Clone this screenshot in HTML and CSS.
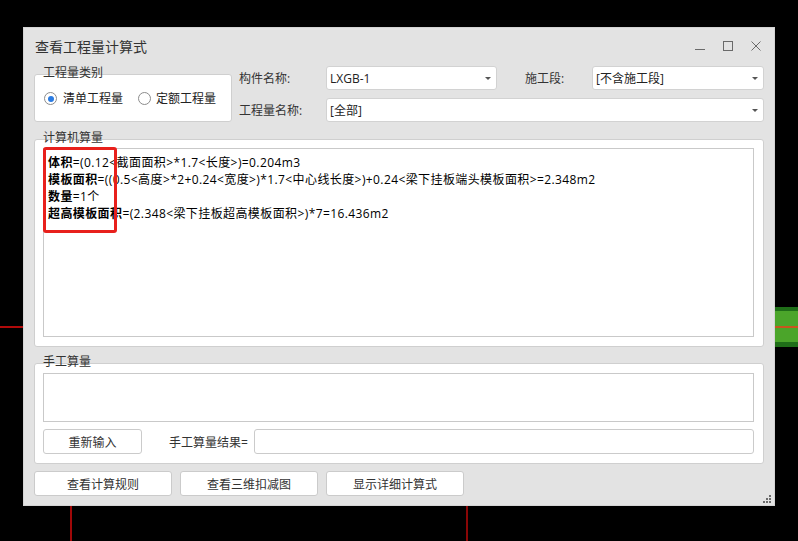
FILE: index.html
```html
<!DOCTYPE html>
<html lang="zh-CN">
<head>
<meta charset="utf-8">
<title>查看工程量计算式</title>
<link rel="stylesheet" href="styles.css">
</head>
<body>
<div class="desktop">
  <div class="bg-hline"></div>
  <div class="bg-vline v1"></div>
  <div class="bg-vline v2"></div>
  <div class="green-bar"><div class="green-line"></div></div>

  <div class="dialog">
    <div class="titlebar">
      <span class="title">查看工程量计算式</span>
      <div class="controls">
        <svg width="10" height="10" viewBox="0 0 10 10"><path d="M0 8.5H10" stroke="#6a6a6a" stroke-width="1"/></svg>
        <svg width="10" height="10" viewBox="0 0 10 10"><rect x="0.5" y="0.5" width="9" height="9" fill="none" stroke="#6a6a6a" stroke-width="1"/></svg>
        <svg width="10" height="10" viewBox="0 0 10 10"><path d="M0.5 0.5L9.5 9.5M9.5 0.5L0.5 9.5" stroke="#6a6a6a" stroke-width="1"/></svg>
      </div>
    </div>

    <div class="top">
      <div class="group type-group">
        <span class="group-title">工程量类别</span>
        <label class="radio"><span class="radio-dot checked"></span>清单工程量</label>
        <label class="radio second"><span class="radio-dot"></span>定额工程量</label>
      </div>
      <div class="fields">
        <div class="field-row">
          <span class="label">构件名称:</span>
          <div class="combo combo-part">LXGB-1<i class="arrow"></i></div>
          <span class="label label-stage">施工段:</span>
          <div class="combo grow">[不含施工段]<i class="arrow"></i></div>
        </div>
        <div class="field-row">
          <span class="label">工程量名称:</span>
          <div class="combo grow">[全部]<i class="arrow"></i></div>
        </div>
      </div>
    </div>

    <div class="group calc-group">
      <span class="group-title">计算机算量</span>
      <div class="textarea formula">
        <div class="line"><b>体积</b>=(0.12&lt;截面面积&gt;*1.7&lt;长度&gt;)=0.204m3</div>
        <div class="line"><b>模板面积</b>=((0.5&lt;高度&gt;*2+0.24&lt;宽度&gt;)*1.7&lt;中心线长度&gt;)+0.24&lt;梁下挂板端头模板面积&gt;=2.348m2</div>
        <div class="line"><b>数量</b>=1个</div>
        <div class="line"><b>超高模板面积</b>=(2.348&lt;梁下挂板超高模板面积&gt;)*7=16.436m2</div>
        <div class="highlight"></div>
      </div>
    </div>

    <div class="group manual-group">
      <span class="group-title">手工算量</span>
      <div class="textarea manual"></div>
      <div class="manual-row">
        <button class="btn btn-reset">重新输入</button>
        <span class="result-label">手工算量结果=</span>
        <div class="input"></div>
      </div>
    </div>

    <div class="actions">
      <button class="btn btn-action">查看计算规则</button>
      <button class="btn btn-action">查看三维扣减图</button>
      <button class="btn btn-action">显示详细计算式</button>
    </div>

    <svg class="grip" width="8" height="8" viewBox="0 0 8 8">
      <rect x="6" y="0" width="2" height="2" fill="#6b6b6b"/>
      <rect x="3" y="3" width="2" height="2" fill="#6b6b6b"/>
      <rect x="6" y="3" width="2" height="2" fill="#6b6b6b"/>
      <rect x="0" y="6" width="2" height="2" fill="#6b6b6b"/>
      <rect x="3" y="6" width="2" height="2" fill="#6b6b6b"/>
      <rect x="6" y="6" width="2" height="2" fill="#6b6b6b"/>
    </svg>
  </div>
</div>
</body>
</html>
```

FILE: styles.css
```css
* { box-sizing: border-box; }

html, body {
  margin: 0;
  padding: 0;
  background: #000;
}

body {
  font-family: "Open Sans", "Noto Sans CJK SC", sans-serif;
  font-size: 12px;
  color: #333;
}

.desktop {
  position: relative;
  width: 798px;
  height: 541px;
  overflow: hidden;
  background: #000;
}

.bg-hline {
  position: absolute;
  left: 0;
  top: 326px;
  width: 23px;
  height: 2px;
  background: #b00a0a;
}

.bg-vline {
  position: absolute;
  top: 506px;
  width: 2px;
  height: 35px;
  background: #a00808;
}
.bg-vline.v1 { left: 70px; }
.bg-vline.v2 { left: 466px; background: #8a0606; }

.green-bar {
  position: absolute;
  left: 775px;
  top: 307px;
  width: 23px;
  height: 40px;
  background: #4ba52a;
  border-top: 4px solid #1f6e18;
  border-bottom: 5px solid #1f6e18;
}
.green-line {
  margin-top: 15px;
  height: 2px;
  background: #c8561e;
}

.dialog {
  position: absolute;
  left: 23px;
  top: 27px;
  width: 752px;
  height: 479px;
  background: #e3e3e3;
  border: 1px solid #d4d4d4;
  padding: 0 10px;
}

.titlebar {
  height: 38px;
  display: flex;
  align-items: center;
  justify-content: space-between;
}
.title {
  margin-left: 1px;
  font-size: 14px;
  line-height: 18px;
  color: #333;
}
.controls {
  display: flex;
  gap: 18px;
  margin-right: 3px;
  margin-top: -2px;
}
.controls svg { display: block; }

.top {
  display: flex;
  height: 56px;
}

.group {
  position: relative;
  background: #fff;
  border: 1px solid #cfcfcf;
  border-radius: 3px;
}
.group-title {
  position: absolute;
  top: -9px;
  left: 8px;
  font-size: 12px;
  line-height: 14px;
  color: #333;
  white-space: nowrap;
}

.type-group {
  width: 198px;
  height: 48px;
  margin-top: 8px;
  display: flex;
  align-items: center;
  padding-left: 9px;
  padding-top: 1px;
}
.radio {
  display: flex;
  align-items: center;
  gap: 6px;
  line-height: 16px;
  color: #222;
}
.radio.second { margin-left: 15px; gap: 5px; }
.radio-dot {
  position: relative;
  width: 13px;
  height: 13px;
  border: 1px solid #8c8c8c;
  border-radius: 50%;
  background: #fff;
}
.radio-dot.checked::after {
  content: "";
  position: absolute;
  left: 2.5px;
  top: 2.5px;
  width: 6px;
  height: 6px;
  border-radius: 50%;
  background: #2a7be2;
}

.fields {
  flex: 1;
  margin-left: 7px;
  display: flex;
  flex-direction: column;
  gap: 8px;
}
.field-row {
  display: flex;
  align-items: center;
  height: 24px;
}
.label {
  width: 87px;
  flex: none;
  color: #333;
  white-space: nowrap;
}
.label-stage {
  width: 95px;
  padding-left: 28px;
}
.combo {
  height: 24px;
  display: flex;
  align-items: center;
  padding: 0 5px 0 3px;
  background: #fff;
  border: 1px solid #d2d2d2;
  border-radius: 3px;
  color: #222;
  font-size: 12px;
}
.combo-part { width: 171px; flex: none; }
.combo.grow { flex: 1; }
.arrow {
  margin-left: auto;
  width: 0;
  height: 0;
  border-left: 3px solid transparent;
  border-right: 3px solid transparent;
  border-top: 3px solid #555;
}

.calc-group {
  margin-top: 17px;
  height: 208px;
  padding: 8px 9px 9px 8px;
}
.textarea {
  position: relative;
  background: #fff;
  border: 1px solid #c9c9c9;
}
.formula {
  height: 100%;
  padding: 5px 4px 0;
  font-size: 12px;
  line-height: 17px;
  letter-spacing: 0.4px;
  color: #000;
}
.formula .line { white-space: nowrap; }
.formula b { font-weight: 700; }
.highlight {
  position: absolute;
  left: -1px;
  top: -2px;
  width: 74px;
  height: 86px;
  border: 3px solid #e8201c;
  border-radius: 3px;
}

.manual-group {
  margin-top: 16px;
  height: 101px;
  padding: 9px 9px 9px 8px;
}
.manual { height: 49px; }
.manual-row {
  margin-top: 7px;
  height: 25px;
  display: flex;
  align-items: center;
}
.btn {
  font-family: "Open Sans", "Noto Sans CJK SC", sans-serif;
  font-size: 12px;
  color: #333;
  background: #fff;
  border: 1px solid #cbcbcb;
  border-radius: 3px;
  height: 25px;
  padding: 0;
}
.btn-reset { width: 99px; flex: none; }
.result-label {
  margin-left: 27px;
  white-space: nowrap;
  color: #333;
}
.input {
  flex: 1;
  margin-left: 6px;
  height: 25px;
  background: #fff;
  border: 1px solid #cbcbcb;
  border-radius: 3px;
}

.actions {
  margin-top: 7px;
  display: flex;
  gap: 8px;
}
.btn-action { width: 138px; }

.grip {
  position: absolute;
  right: 3px;
  bottom: 2px;
}
```
